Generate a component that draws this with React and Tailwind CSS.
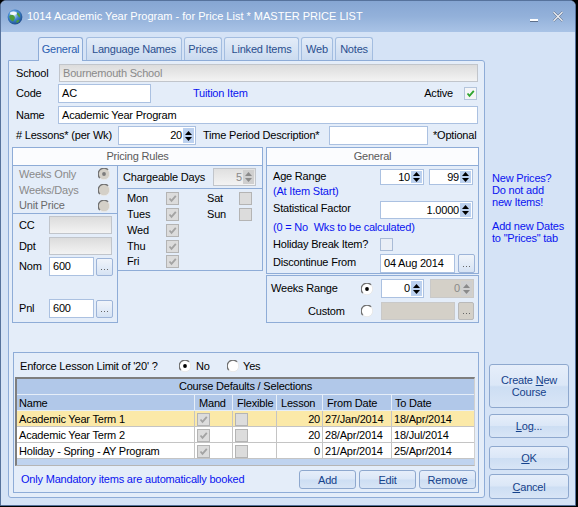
import React from "react";

function Field({ className = "", variant = "white", right = false, children }) {
  const v =
    variant === "white"
      ? "bg-white border-[#abc1e1] text-black"
      : variant === "light"
      ? "bg-[linear-gradient(to_bottom,#dcdcdc,#f3f3f3)] border-[#c1c5cb] text-[#8a8a8a]"
      : "bg-[#d4d0c8] border-[#c9c9c9] text-[#8a8a8a]";
  return (
    <div
      className={`flex items-center overflow-hidden whitespace-nowrap border ${v} ${
        right ? "justify-end pr-[2px]" : "pl-[3px]"
      } ${className}`}
    >
      {children}
    </div>
  );
}

function Spinner({ className = "", value, variant = "white" }) {
  const box =
    variant === "white"
      ? "bg-white border-[#abc1e1] text-black"
      : variant === "light"
      ? "bg-[linear-gradient(to_bottom,#e0e0e0,#f3f3f3)] border-[#c1c5cb] text-[#8a8a8a]"
      : "bg-[#d4d0c8] border-[#c9c9c9] text-[#8a8a8a]";
  const btn = variant === "white" ? "bg-[#bcd1ef]" : "bg-[#cfcfcf]";
  const arrow = variant === "white" ? "#000" : "#8a8a8a";
  return (
    <div className={`flex border ${box} ${className}`}>
      <div className="flex flex-1 items-center justify-end pr-[1px]">{value}</div>
      <div className={`my-[1px] mr-[1px] flex w-[11px] flex-col items-center justify-center gap-[2px] ${btn}`}>
        <svg width="7" height="4" viewBox="0 0 7 4">
          <path d="M3.5 0L7 4H0Z" fill={arrow} />
        </svg>
        <svg width="7" height="4" viewBox="0 0 7 4">
          <path d="M0 0H7L3.5 4Z" fill={arrow} />
        </svg>
      </div>
    </div>
  );
}

function Check({ checked = false, variant = "disabled" }) {
  const box =
    variant === "disabled"
      ? "border-[#b4b4b4] bg-[#dcdcdc]"
      : variant === "green"
      ? "border-[#b4c5dc] bg-[#f4f5f7]"
      : "border-[#a9bbd6] bg-[#e9eef6]";
  const color = variant === "green" ? "#2fa52f" : "#a3a3a3";
  return (
    <div className={`flex h-[13px] w-[13px] shrink-0 items-center justify-center border ${box}`}>
      {checked && (
        <svg width="11" height="11" viewBox="0 0 11 11">
          <path d="M2.5 5.5L4.5 7.8L8.8 2.8" stroke={color} strokeWidth="1.8" fill="none" />
        </svg>
      )}
    </div>
  );
}

function Radio({ checked = false, disabled = false }) {
  return (
    <svg width="12" height="12" viewBox="0 0 12 12" className="shrink-0">
      <circle cx="6" cy="6" r="5.5" fill={disabled ? "#d4d0c8" : "#ffffff"} />
      <path d="M1.9 10.1A5.7 5.7 0 0 1 10.1 1.9" stroke="#6f6f6f" strokeWidth="1.3" fill="none" />
      <path d="M10.1 1.9A5.7 5.7 0 0 1 1.9 10.1" stroke="#e8e8e8" strokeWidth="1" fill="none" />
      {checked && <circle cx="6" cy="6" r="1.9" fill={disabled ? "#7c7c7c" : "#000"} />}
    </svg>
  );
}

function Dots({ className = "", disabled = false }) {
  return (
    <div
      className={`flex items-end justify-center rounded-[2px] border pb-[4px] ${
        disabled ? "border-[#b9b9b9] bg-[#d4d0c8]" : "border-[#9db4d8] bg-[linear-gradient(to_bottom,#f0f4fa,#d6e3f4)]"
      } ${className}`}
    >
      <svg width="7" height="2" viewBox="0 0 7 2">
        <rect x="0" y="0" width="1" height="1" fill="#666" />
        <rect x="3" y="0" width="1" height="1" fill="#666" />
        <rect x="6" y="0" width="1" height="1" fill="#666" />
      </svg>
    </div>
  );
}

function Btn({ className = "", children }) {
  return (
    <div
      className={`flex flex-col items-center justify-center rounded-[3px] border border-[#8ea8ce] bg-[linear-gradient(to_bottom,#e6eefa_0%,#dbe7f7_48%,#cddef3_52%,#d8e5f6_100%)] leading-[12px] text-[#15428b] ${className}`}
    >
      {children}
    </div>
  );
}

function Tab({ children, active = false, className = "" }) {
  return active ? (
    <div
      className={`relative z-10 -mb-[1px] flex h-[24px] items-center justify-center rounded-t-[3px] border border-b-0 border-[#8eacd7] bg-[#e4edf9] text-[#2b5db0] ${className}`}
    >
      {children}
    </div>
  ) : (
    <div
      className={`flex h-[23px] items-center justify-center rounded-t-[3px] border border-b-0 border-[#a3bde0] bg-[linear-gradient(to_bottom,#e3ecf8,#cbdbf0)] text-[#2a4f8f] ${className}`}
    >
      {children}
    </div>
  );
}

const rows = [
  { name: "Academic Year Term 1", lesson: "20", from: "27/Jan/2014", to: "18/Apr/2014", hl: true },
  { name: "Academic Year Term 2", lesson: "20", from: "28/Apr/2014", to: "18/Jul/2014", hl: false },
  { name: "Holiday - Spring - AY Program", lesson: "0", from: "21/Apr/2014", to: "25/Apr/2014", hl: false },
];

export default function App() {
  return (
    <div className="h-[507px] w-[578px] overflow-hidden bg-black font-['Liberation_Sans',Arial,sans-serif] text-[11px] text-black">
      <div className="flex h-[506px] w-[576px] flex-col overflow-hidden rounded-t-[6px] border border-[#56729c] bg-[#d5e3f6]">
        {/* Title bar */}
        <div className="flex h-[31px] shrink-0 items-center bg-[linear-gradient(to_bottom,#86a6d3,#93b1da_50%,#a9c3e6)] pl-[6px]">
          <svg width="16" height="16" viewBox="0 0 16 16">
            <defs>
              <radialGradient id="gl" cx="0.4" cy="0.35" r="0.75">
                <stop offset="0" stopColor="#dff0ff" />
                <stop offset="0.45" stopColor="#3f86cf" />
                <stop offset="1" stopColor="#173f7c" />
              </radialGradient>
            </defs>
            <circle cx="8" cy="8" r="7.4" fill="url(#gl)" />
            <path d="M2.2 7C4 5 6.5 5.6 7.6 7.4C8.6 9.2 7 10.4 6.2 12.6C4.2 12 2.4 10 2.2 7Z" fill="#4e9b3a" />
            <path d="M10.4 3.2C12.4 4.2 13.6 6.2 13 8.6C11.6 8 10.4 6.6 9.8 4.6Z" fill="#4e9b3a" />
            <path d="M9.5 11.5C10.8 10.6 12 10.8 12.6 11.4C11.8 12.8 10.6 13.6 9.4 13.8Z" fill="#4e9b3a" />
            <ellipse cx="6.4" cy="4.2" rx="3.4" ry="1.7" fill="#ffffff" opacity="0.85" />
          </svg>
          <span className="ml-[4px] whitespace-nowrap text-[11px] text-white">
            1014 Academic Year Program - for Price List * MASTER PRICE LIST
          </span>
          <div className="flex-1" />
          <svg width="10" height="6" viewBox="0 0 10 6" className="mt-[8px]">
            <rect x="1" y="1" width="8" height="2" fill="#ffffff" />
            <rect x="1" y="3" width="8" height="1" fill="#5d6f8a" />
          </svg>
          <svg width="12" height="11" viewBox="0 0 12 11" className="ml-[13px] mr-[11px]">
            <path d="M1.5 1L10.5 10M10.5 1L1.5 10" stroke="#5a6a80" strokeWidth="2.2" />
            <path d="M1.5 1L10.5 10M10.5 1L1.5 10" stroke="#f4f6fa" strokeWidth="1.1" />
          </svg>
        </div>

        {/* Body */}
        <div className="flex flex-1 tracking-[-0.2px]">
          {/* Left column */}
          <div className="ml-[7px] flex w-[477px] flex-col">
            {/* Tabs */}
            <div className="ml-[30px] mt-[5px] flex h-[23px] items-end">
              <Tab active className="w-[45px]">General</Tab>
              <Tab className="ml-[3px] w-[96px]">Language Names</Tab>
              <Tab className="ml-[2px] w-[38px]">Prices</Tab>
              <Tab className="ml-[2px] w-[75px]">Linked Items</Tab>
              <Tab className="ml-[2px] w-[32px]">Web</Tab>
              <Tab className="ml-[2px] w-[38px]">Notes</Tab>
            </div>

            {/* Panel */}
            <div className="flex h-[438px] flex-col rounded-[3px] rounded-tl-none border border-[#8eacd7] bg-[#e4edf9] pt-[3px]">
              {/* School */}
              <div className="flex h-[18px] items-center">
                <span className="w-[50px] pl-[7px]">School</span>
                <Field variant="light" className="h-[18px] w-[419px] pl-[2px]">
                  Bournemouth School
                </Field>
              </div>
              {/* Code */}
              <div className="mt-[2px] flex h-[19px] items-center">
                <span className="w-[49px] pl-[7px]">Code</span>
                <Field className="h-[19px] w-[93px]">AC</Field>
                <span className="ml-[42px] text-[#0a14f0]">Tuition Item</span>
                <div className="flex-1" />
                <span>Active</span>
                <div className="ml-[11px] mr-[7px]">
                  <Check checked variant="green" />
                </div>
              </div>
              {/* Name */}
              <div className="mt-[3px] flex h-[18px] items-center">
                <span className="w-[49px] pl-[7px]">Name</span>
                <Field className="h-[18px] w-[420px]">Academic Year Program</Field>
              </div>
              {/* Lessons */}
              <div className="mt-[2px] flex h-[19px] items-center">
                <span className="w-[109px] whitespace-nowrap pl-[7px]"># Lessons* (per Wk)</span>
                <Spinner className="h-[19px] w-[78px]" value="20" />
                <span className="ml-[7px] w-[126px] whitespace-nowrap">Time Period Description*</span>
                <Field className="h-[19px] w-[99px]" />
                <span className="ml-[5px] whitespace-nowrap">*Optional</span>
              </div>

              {/* Boxes */}
              <div className="mt-[2px] flex">
                {/* Pricing Rules */}
                <div className="ml-[3px] flex w-[251px] flex-col">
                  <div className="flex h-[19px] items-center justify-center border border-[#8eacd7] bg-[#fbfcfe] text-[#5a5a5a]">
                    Pricing Rules
                  </div>
                  <div className="flex">
                    <div className="flex w-[106px] flex-col border-x border-b border-[#8eacd7]">
                      <div className="flex flex-col border-b border-[#8eacd7] text-[#8a8a8a]">
                        <div className="flex h-[16px] items-center justify-between pl-[6px] pr-[7px]">
                          <span>Weeks Only</span>
                          <Radio disabled checked />
                        </div>
                        <div className="flex h-[16px] items-center justify-between pl-[6px] pr-[7px]">
                          <span>Weeks/Days</span>
                          <Radio disabled />
                        </div>
                        <div className="flex h-[15px] items-center justify-between pl-[6px] pr-[7px] text-[#6a6a6a]">
                          <span>Unit Price</span>
                          <Radio disabled />
                        </div>
                      </div>
                      <div className="flex flex-col pb-[4px]">
                        <div className="mt-[2px] flex h-[18px] items-center">
                          <span className="w-[36px] pl-[6px]">CC</span>
                          <Field variant="light" className="h-[18px] w-[63px]" />
                        </div>
                        <div className="mt-[3px] flex h-[18px] items-center">
                          <span className="w-[36px] pl-[6px]">Dpt</span>
                          <Field variant="light" className="h-[18px] w-[63px]" />
                        </div>
                        <div className="mt-[2px] flex h-[19px] items-center">
                          <span className="w-[36px] pl-[6px]">Nom</span>
                          <Field className="h-[19px] w-[45px]">600</Field>
                          <Dots className="ml-[2px] h-[18px] w-[17px]" />
                        </div>
                        <div className="mt-[23px] flex h-[19px] items-center">
                          <span className="w-[36px] pl-[6px]">Pnl</span>
                          <Field className="h-[19px] w-[45px]">600</Field>
                          <Dots className="ml-[2px] h-[18px] w-[17px]" />
                        </div>
                      </div>
                    </div>
                    <div className="flex h-[105px] w-[145px] flex-col border-b border-r border-[#8eacd7]">
                      <div className="flex h-[23px] items-center border-b border-[#8eacd7]">
                        <span className="w-[95px] pl-[5px]">Chargeable Days</span>
                        <Spinner variant="light" className="h-[18px] w-[43px]" value="5" />
                      </div>
                      <div className="flex flex-col pt-[1px]">
                        {[
                          ["Mon", "Sat"],
                          ["Tues", "Sun"],
                          ["Wed", null],
                          ["Thu", null],
                          ["Fri", null],
                        ].map(([a, b], i) => (
                          <div key={a} className={`flex items-center ${i === 4 ? "h-[15px]" : "h-[16px]"}`}>
                            <span className="w-[48px] pl-[9px]">{a}</span>
                            <Check checked variant="disabled" />
                            {b && (
                              <>
                                <span className="ml-[28px] w-[32px]">{b}</span>
                                <Check variant="disabled" />
                              </>
                            )}
                          </div>
                        ))}
                      </div>
                    </div>
                  </div>
                </div>

                {/* General */}
                <div className="ml-[3px] flex w-[213px] flex-col">
                  <div className="flex h-[19px] items-center justify-center border border-[#8eacd7] bg-[#fbfcfe] text-[#5a5a5a]">
                    General
                  </div>
                  <div className="flex h-[108px] flex-col border-x border-b border-[#8eacd7]">
                    <div className="mt-[3px] flex h-[16px] items-start">
                      <span className="w-[113px] pl-[6px] leading-[14px]">Age Range</span>
                      <Spinner className="h-[16px] w-[44px]" value="10" />
                      <Spinner className="ml-[5px] h-[16px] w-[44px]" value="99" />
                    </div>
                    <div className="flex h-[13px] items-center pl-[6px] text-[#0a14f0]">(At Item Start)</div>
                    <div className="mt-[3px] flex h-[18px] items-start">
                      <span className="w-[113px] pl-[6px] leading-[14px]">Statistical Factor</span>
                      <Spinner className="h-[18px] w-[93px]" value="1.0000" />
                    </div>
                    <div className="flex h-[16px] items-center whitespace-pre pl-[6px] text-[#0a14f0]">
                      (0 = No  Wks to be calculated)
                    </div>
                    <div className="mt-[1px] flex h-[16px] items-center">
                      <span className="w-[113px] pl-[6px]">Holiday Break Item?</span>
                      <Check variant="plain" />
                    </div>
                    <div className="mt-[2px] flex h-[19px] items-start">
                      <span className="w-[113px] pl-[6px] leading-[16px]">Discontinue From</span>
                      <Field className="h-[19px] w-[75px]">04 Aug 2014</Field>
                      <Dots className="ml-[3px] h-[19px] w-[17px]" />
                    </div>
                  </div>
                  <div className="mt-[1px] flex h-[48px] flex-col border border-[#8eacd7]">
                    <div className="mt-[3px] flex h-[19px] items-center">
                      <span className="w-[94px] pl-[4px]">Weeks Range</span>
                      <Radio checked />
                      <Spinner className="ml-[8px] h-[19px] w-[43px]" value="0" />
                      <Spinner variant="beige" className="ml-[6px] h-[19px] w-[44px]" value="0" />
                    </div>
                    <div className="mt-[4px] flex h-[18px] items-center">
                      <span className="w-[94px] pl-[41px]">Custom</span>
                      <Radio />
                      <Field variant="beige" className="ml-[8px] h-[18px] w-[74px]" />
                      <Dots disabled className="ml-[3px] h-[18px] w-[16px]" />
                    </div>
                  </div>
                </div>
              </div>

              {/* Enforce group */}
              <div className="ml-[4px] mt-[29px] flex h-[141px] w-[466px] flex-col border border-[#8eacd7] pt-[6px]">
                <div className="flex h-[14px] items-center">
                  <span className="w-[165px] whitespace-nowrap pl-[6px]">Enforce Lesson Limit of '20' ?</span>
                  <Radio checked />
                  <span className="ml-[5px] w-[31px]">No</span>
                  <Radio />
                  <span className="ml-[4px]">Yes</span>
                </div>

                {/* Table */}
                <div className="ml-[1px] mt-[4px] flex w-[460px] flex-col border-l-2 border-t-2 border-r border-b border-l-[#7e7e7e] border-t-[#7e7e7e] border-r-[#d0d0d0] border-b-[#b5b5b5]">
                  <div className="flex h-[16px] items-center justify-center border-b border-[#e6eef8] bg-[#b1c8e9]">
                    Course Defaults / Selections
                  </div>
                  <div className="grid h-[16px] grid-cols-[178px_38px_44px_46px_69px_82px] border-b border-[#e6eef8] bg-[#b1c8e9]">
                    <div className="flex items-center border-r border-[#e6eef8] pl-[2px]">Name</div>
                    <div className="flex items-center border-r border-[#e6eef8] pl-[4px]">Mand</div>
                    <div className="flex items-center border-r border-[#e6eef8] pl-[4px]">Flexible</div>
                    <div className="flex items-center border-r border-[#e6eef8] pl-[4px]">Lesson</div>
                    <div className="flex items-center border-r border-[#e6eef8] pl-[4px]">From Date</div>
                    <div className="flex items-center pl-[3px]">To Date</div>
                  </div>
                  {rows.map((r) => (
                    <div
                      key={r.name}
                      className={`grid h-[16px] grid-cols-[178px_38px_44px_46px_69px_82px] border-b border-[#c4c4c4] ${
                        r.hl ? "bg-[#fbe9a8]" : "bg-white"
                      }`}
                    >
                      <div className="flex items-center whitespace-nowrap border-r border-[#c4c4c4] pl-[2px]">{r.name}</div>
                      <div className="flex items-center border-r border-[#c4c4c4] pl-[2px]">
                        <Check checked variant="disabled" />
                      </div>
                      <div className="flex items-center border-r border-[#c4c4c4] pl-[2px]">
                        <Check variant="disabled" />
                      </div>
                      <div className="flex items-center justify-end border-r border-[#c4c4c4] pr-[2px]">{r.lesson}</div>
                      <div className="flex items-center border-r border-[#c4c4c4] pl-[2px]">{r.from}</div>
                      <div className="flex items-center pl-[2px]">{r.to}</div>
                    </div>
                  ))}
                  <div className="h-[6px] bg-[#bfd3ef]" />
                </div>

                <div className="mt-[4px] flex h-[19px] items-center">
                  <span className="pl-[7px] text-[#0a14f0]">Only Mandatory items are automatically booked</span>
                  <div className="flex-1" />
                  <Btn className="h-[19px] w-[57px]">Add</Btn>
                  <Btn className="ml-[3px] h-[19px] w-[57px]">Edit</Btn>
                  <Btn className="ml-[3px] mr-[2px] h-[19px] w-[57px]">Remove</Btn>
                </div>
              </div>
            </div>
          </div>

          {/* Right column */}
          <div className="ml-[4px] flex w-[80px] flex-col">
            <div className="mt-[140px] pl-[3px] leading-[12px] text-[#0a14f0]">
              <div>New Prices?</div>
              <div>Do not add</div>
              <div>new Items!</div>
              <div>&nbsp;</div>
              <div>Add new Dates</div>
              <div>to "Prices" tab</div>
            </div>
            <Btn className="mt-[120px] h-[44px] w-[80px]">
              <span>
                Create <span className="underline">N</span>ew
              </span>
              <span>Course</span>
            </Btn>
            <Btn className="mt-[6px] h-[24px] w-[80px]">
              <span>
                <span className="underline">L</span>og...
              </span>
            </Btn>
            <Btn className="mt-[8px] h-[24px] w-[80px]">
              <span>
                <span className="underline">O</span>K
              </span>
            </Btn>
            <Btn className="mt-[4px] h-[25px] w-[80px]">
              <span>
                <span className="underline">C</span>ancel
              </span>
            </Btn>
          </div>
        </div>
      </div>
    </div>
  );
}
